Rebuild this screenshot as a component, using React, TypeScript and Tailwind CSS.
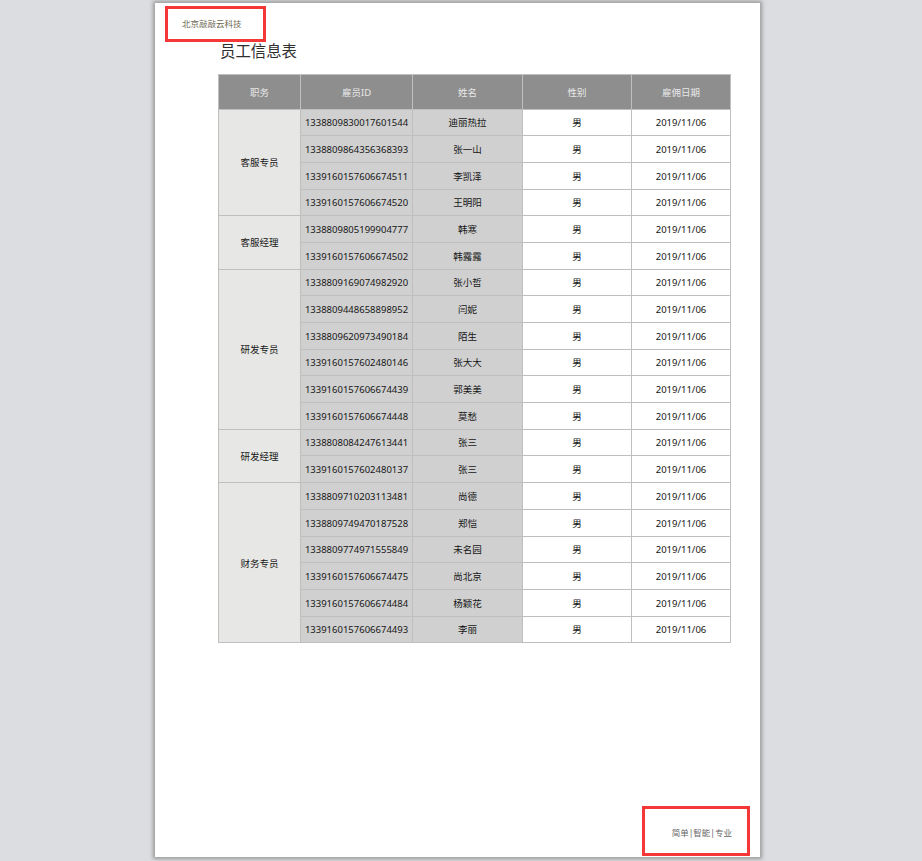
const FONT = 'font-["Noto_Sans","Noto_Sans_CJK_SC",sans-serif]';

const groups: { role: string; rows: [string, string][] }[] = [
  {
    role: "客服专员",
    rows: [
      ["1338809830017601544", "迪丽热拉"],
      ["1338809864356368393", "张一山"],
      ["1339160157606674511", "李凯泽"],
      ["1339160157606674520", "王明阳"],
    ],
  },
  {
    role: "客服经理",
    rows: [
      ["1338809805199904777", "韩寒"],
      ["1339160157606674502", "韩露露"],
    ],
  },
  {
    role: "研发专员",
    rows: [
      ["1338809169074982920", "张小哲"],
      ["1338809448658898952", "闫妮"],
      ["1338809620973490184", "陌生"],
      ["1339160157602480146", "张大大"],
      ["1339160157606674439", "郭美美"],
      ["1339160157606674448", "莫愁"],
    ],
  },
  {
    role: "研发经理",
    rows: [
      ["1338808084247613441", "张三"],
      ["1339160157602480137", "张三"],
    ],
  },
  {
    role: "财务专员",
    rows: [
      ["1338809710203113481", "尚德"],
      ["1338809749470187528", "郑恺"],
      ["1338809774971555849", "未名园"],
      ["1339160157606674475", "尚北京"],
      ["1339160157606674484", "杨颖花"],
      ["1339160157606674493", "李丽"],
    ],
  },
];

const cell = "border border-[#bfbfbf] px-0 pb-0 pt-[2px] text-center align-middle";

export default function App() {
  return (
    <div className={`h-[861px] w-[922px] overflow-hidden bg-[#dcdde1] pt-[3px] pl-[155px] ${FONT}`}>
      <div className="flex h-[854px] w-[605px] flex-col bg-white shadow-[0_0_4px_2px_#999999]">
        <div className="ml-[10px] mt-[3px] flex h-[36px] w-[101px] items-center border-[3px] border-[#f53737] pl-[14px] text-[8.5px] leading-none whitespace-nowrap text-[#6b6650]">
          北京敲敲云科技
        </div>
        <h1 className="ml-[65px] mt-[-2px] text-[15.4px] leading-[24px] font-normal text-[#2f2f2f]">员工信息表</h1>
        <table className="ml-[63px] mt-[10px] w-[512px] table-fixed border-collapse text-[9.5px] text-[#161616]">
          <colgroup>
            <col className="w-[82px]" />
            <col className="w-[112px]" />
            <col className="w-[110px]" />
            <col className="w-[109px]" />
            <col className="w-[99px]" />
          </colgroup>
          <thead>
            <tr className="h-[34.5px] bg-[#8e8e8e] text-[#e8e8e8]">
              {["职务", "雇员ID", "姓名", "性别", "雇佣日期"].map((h) => (
                <th key={h} className={`${cell} font-normal`}>
                  {h}
                </th>
              ))}
            </tr>
          </thead>
          <tbody>
            {groups.map((g) =>
              g.rows.map(([id, name], i) => (
                <tr key={id} className="h-[26.7px]">
                  {i === 0 && (
                    <td rowSpan={g.rows.length} className={`${cell} bg-[#e7e7e5]`}>
                      {g.role}
                    </td>
                  )}
                  <td className={`${cell} bg-[#d0d0d0]`}>{id}</td>
                  <td className={`${cell} bg-[#d0d0d0]`}>{name}</td>
                  <td className={cell}>男</td>
                  <td className={cell}>2019/11/06</td>
                </tr>
              ))
            )}
          </tbody>
        </table>
        <div className="mt-auto mb-[1px] ml-[487px] flex h-[50px] w-[108px] items-center justify-end border-[3px] border-[#f53737] pt-[5px] pr-[15px] text-[8.5px] leading-none whitespace-nowrap text-[#666]">
          简单|智能|专业
        </div>
      </div>
    </div>
  );
}
